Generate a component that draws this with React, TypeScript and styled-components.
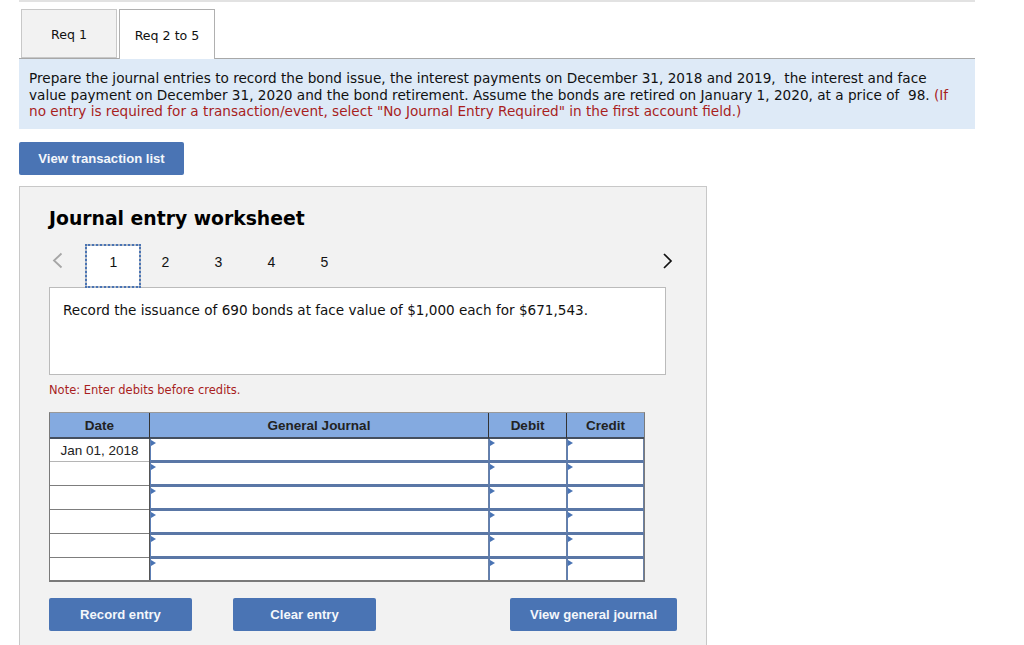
import React from "react";
import styled, { createGlobalStyle } from "styled-components";

const Global = createGlobalStyle`
  html, body { margin: 0; padding: 0; background: #fff; height: 645px; overflow: hidden; }
  body { font-family: "DejaVu Sans", Verdana, sans-serif; color: #111; }
`;
const Page = styled.div`
  width: 956px;
  margin-left: 19px;
`;
const TopRule = styled.div`
  height: 2px;
  background: #e2e2e2;
`;
const Tabs = styled.div`
  display: flex;
  gap: 2px;
  padding: 7px 0 0 2px;
  height: 49px;
  border-bottom: 1px solid #a8a8a8;
`;
const Tab = styled.div<{ $active?: boolean }>`
  width: 96px;
  height: ${(p) => (p.$active ? "50px" : "49px")};
  box-sizing: border-box;
  display: flex;
  align-items: center;
  justify-content: center;
  padding-top: 2px;
  font-size: 12.6px;
  color: #111;
  background: ${(p) => (p.$active ? "#fff" : "#f2f2f2")};
  border: 1px solid ${(p) => (p.$active ? "#b0b0b0" : "#c8c8c8")};
  border-bottom: ${(p) => (p.$active ? "none" : "1px solid #c8c8c8")};
`;
const Instructions = styled.div`
  background: #deeaf7;
  height: 70px;
  box-sizing: border-box;
  padding: 11px 20px 0 10px;
  font-size: 13.63px;
  line-height: 16.6px;
`;
const Red = styled.span`
  color: #a81e1e;
`;
const Button = styled.button<{ $w: number; $ml?: number }>`
  width: ${(p) => p.$w}px;
  height: 33px;
  margin-left: ${(p) => p.$ml ?? 0}px;
  padding: 0;
  border: none;
  border-radius: 2px;
  background: #4a74b4;
  color: #f4f7fb;
  font-family: "Liberation Sans", Arial, sans-serif;
  font-weight: 700;
  font-size: 13.1px;
`;
const ListButton = styled(Button)`
  display: block;
  margin-top: 13px;
`;
const Panel = styled.div`
  margin-top: 11px;
  width: 688px;
  height: 480px;
  box-sizing: border-box;
  background: #f2f2f2;
  border: 1px solid #c8c8c8;
  border-bottom: none;
  padding: 20px 0 0 29px;
`;
const Title = styled.h2`
  margin: 0;
  height: 24px;
  font-size: 18.8px;
  line-height: 24px;
  font-weight: 700;
  color: #000;
`;
const Pager = styled.div`
  display: flex;
  align-items: flex-start;
  height: 44px;
  margin-top: 13px;
  width: 617px;
  position: relative;
`;
const PrevIcon = styled.svg`
  width: 11px;
  height: 17px;
  margin: 8px 22px 0 3px;
  flex: none;
`;
const NextIcon = styled.svg`
  width: 10px;
  height: 16px;
  margin: 9px -7px 0 auto;
  flex: none;
`;
const PageNum = styled.div<{ $active?: boolean }>`
  width: ${(p) => (p.$active ? "56px" : "53px")};
  height: ${(p) => (p.$active ? "44px" : "36px")};
  margin-right: ${(p) => (p.$active ? "-2px" : "0")};
  box-sizing: border-box;
  display: flex;
  align-items: flex-start;
  justify-content: center;
  padding-top: 10px;
  padding-left: ${(p) => (p.$active ? "1px" : "0")};
  font-family: "Liberation Sans", Arial, sans-serif;
  font-size: 14px;
  line-height: 16px;
  color: #111;
  background: ${(p) => (p.$active ? "#fff" : "transparent")};
  outline: ${(p) => (p.$active ? "2px dotted #4a74b4" : "none")};
  outline-offset: -2px;
  box-shadow: ${(p) => (p.$active ? "inset 0 0 0 2px #b4bcc8" : "none")};
  position: relative;
  z-index: ${(p) => (p.$active ? 1 : 2)};
`;
const Prompt = styled.div`
  width: 617px;
  height: 88px;
  box-sizing: border-box;
  margin-top: -1px;
  background: #fff;
  border: 1px solid #bbb;
  padding: 14px 13px;
  font-size: 13.57px;
  line-height: 17px;
`;
const Note = styled.div`
  margin-top: 7px;
  font-size: 11.5px;
  line-height: 16px;
  color: #a81e1e;
`;
const Table = styled.div`
  margin-top: 14px;
  width: 596px;
  box-sizing: border-box;
  background: #fff;
  border: 1px solid #7a7a7a;
  border-top-color: #999;
  border-bottom-width: 2px;
  font-family: "Liberation Sans", Arial, sans-serif;
  display: grid;
  grid-template-columns: 100px 339px 78px 77px;
`;
const HeadCell = styled.div`
  height: 26px;
  box-sizing: border-box;
  display: flex;
  align-items: center;
  justify-content: center;
  padding-top: 1px;
  background: #84aae0;
  border-right: 1px solid #333;
  border-bottom: 2px solid #454f5e;
  font-size: 13.5px;
  font-weight: 700;
  color: #222;
  &:nth-child(4) { border-right: none; }
`;
const DateCell = styled.div<{ $last?: boolean; $light?: boolean }>`
  height: ${(p) => (p.$last ? "21px" : "23px")};
  box-sizing: border-box;
  background: #fff;
  display: flex;
  align-items: center;
  justify-content: center;
  padding-top: 1px;
  font-size: 13.5px;
  color: #222;
  border-bottom: ${(p) => (p.$last ? "none" : `1px solid ${p.$light ? "#b5b5b5" : "#7d7d7d"}`)};
  border-right: 1px solid #555;
  position: relative;
  &::after {
    content: "";
    position: absolute;
    right: -1px;
    bottom: ${(p) => (p.$last ? "0" : "-2px")};
    width: 1px;
    height: 2px;
    background: #555;
  }
`;
const EntryCell = styled.div<{ $last?: boolean }>`
  height: ${(p) => (p.$last ? "21px" : "24px")};
  box-sizing: border-box;
  background: #fff;
  position: relative;
  border-left: 1px solid #5d7fb5;
  border-right: 1px solid #6a80a5;
  border-bottom: ${(p) => (p.$last ? "none" : "3px solid #5a77a6")};
  &::before {
    content: "";
    position: absolute;
    left: 0;
    top: 1px;
    border-left: 5px solid #4a74b4;
    border-top: 3.5px solid transparent;
    border-bottom: 3.5px solid transparent;
  }
`;
const Actions = styled.div`
  display: flex;
  margin-top: 16px;
`;

const rows = ["Jan 01, 2018", "", "", "", "", ""];

export default function App() {
  return (
    <Page>
      <Global />
      <TopRule />
      <Tabs>
        <Tab>Req 1</Tab>
        <Tab $active>Req 2 to 5</Tab>
      </Tabs>
      <Instructions>
        Prepare the journal entries to record the bond issue, the interest payments on December 31, 2018 and 2019,&nbsp; the interest and face value payment on December 31, 2020 and the bond retirement. Assume the bonds are retired on January 1, 2020, at a price of&nbsp; 98. <Red>(If no entry is required for a transaction/event, select "No Journal Entry Required" in the first account field.)</Red>
      </Instructions>
      <ListButton $w={165}>View transaction list</ListButton>
      <Panel>
        <Title>Journal entry worksheet</Title>
        <Pager>
          <PrevIcon viewBox="0 0 11 17">
            <path d="M9.5 1.5 L2 8.5 L9.5 15.5" fill="none" stroke="#a6a6a6" strokeWidth="1.8" />
          </PrevIcon>
          <PageNum $active>1</PageNum>
          <PageNum>2</PageNum>
          <PageNum>3</PageNum>
          <PageNum>4</PageNum>
          <PageNum>5</PageNum>
          <NextIcon viewBox="0 0 10 16">
            <path d="M1 1 L8 8 L1 15" fill="none" stroke="#111" strokeWidth="1.7" />
          </NextIcon>
        </Pager>
        <Prompt>Record the issuance of 690 bonds at face value of $1,000 each for $671,543.</Prompt>
        <Note>Note: Enter debits before credits.</Note>
        <Table>
          <HeadCell>Date</HeadCell>
          <HeadCell>General Journal</HeadCell>
          <HeadCell>Debit</HeadCell>
          <HeadCell>Credit</HeadCell>
          {rows.map((d, i) => (
            <React.Fragment key={i}>
              <DateCell $last={i === 5} $light={i === 0}>{d}</DateCell>
              <EntryCell $last={i === 5} />
              <EntryCell $last={i === 5} />
              <EntryCell $last={i === 5} />
            </React.Fragment>
          ))}
        </Table>
        <Actions>
          <Button $w={143}>Record entry</Button>
          <Button $w={143} $ml={41}>Clear entry</Button>
          <Button $w={167} $ml={134}>View general journal</Button>
        </Actions>
      </Panel>
    </Page>
  );
}
